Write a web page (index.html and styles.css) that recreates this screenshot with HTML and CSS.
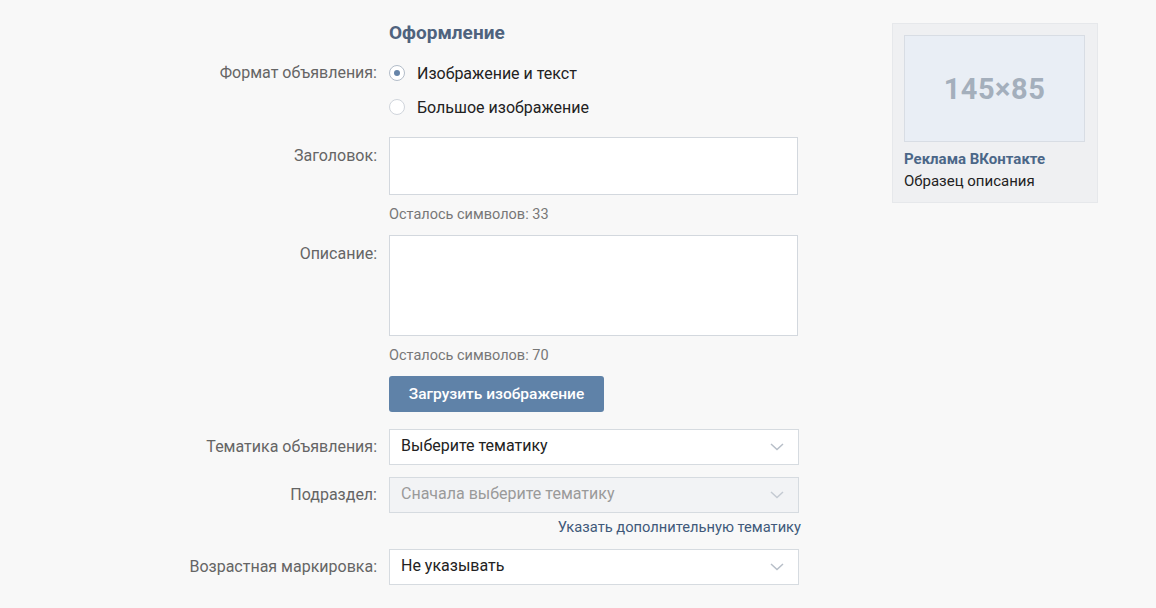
FILE: index.html
```html
<!DOCTYPE html>
<html lang="ru">
<head>
<meta charset="utf-8">
<title>Оформление</title>
<link rel="stylesheet" href="styles.css">
</head>
<body>
<div class="page">
  <div class="form">
    <div class="row heading-row">
      <div class="label"></div>
      <h2 class="heading">Оформление</h2>
    </div>

    <div class="row radio-row">
      <div class="label label-radio">Формат объявления:</div>
      <div class="radios">
        <div class="radio checked"><span class="dot"></span><span>Изображение и текст</span></div>
        <div class="radio"><span class="dot"></span><span>Большое изображение</span></div>
      </div>
    </div>

    <div class="row field-row">
      <div class="label label-top">Заголовок:</div>
      <div class="control">
        <div class="input input-title"></div>
        <div class="counter">Осталось символов: 33</div>
      </div>
    </div>

    <div class="row field-row">
      <div class="label label-top">Описание:</div>
      <div class="control">
        <div class="input input-desc"></div>
        <div class="counter">Осталось символов: 70</div>
      </div>
    </div>

    <div class="row button-row">
      <div class="label"></div>
      <div class="control"><button class="btn">Загрузить изображение</button></div>
    </div>

    <div class="row select-row">
      <div class="label">Тематика объявления:</div>
      <div class="select"><span>Выберите тематику</span><svg class="chev" width="14" height="8" viewBox="0 0 14 8"><path d="M1 1l6 5.5L13 1" fill="none" stroke="#b7bec8" stroke-width="1.5"/></svg></div>
    </div>

    <div class="row select-row sub-row">
      <div class="label">Подраздел:</div>
      <div class="control">
        <div class="select disabled"><span>Сначала выберите тематику</span><svg class="chev" width="14" height="8" viewBox="0 0 14 8"><path d="M1 1l6 5.5L13 1" fill="none" stroke="#c4cad2" stroke-width="1.5"/></svg></div>
        <div class="link-line"><a class="link">Указать дополнительную тематику</a></div>
      </div>
    </div>

    <div class="row select-row age-row">
      <div class="label">Возрастная маркировка:</div>
      <div class="select"><span>Не указывать</span><svg class="chev" width="14" height="8" viewBox="0 0 14 8"><path d="M1 1l6 5.5L13 1" fill="none" stroke="#b7bec8" stroke-width="1.5"/></svg></div>
    </div>
  </div>

  <aside class="preview">
    <div class="preview-img">145×85</div>
    <div class="preview-title">Реклама ВКонтакте</div>
    <div class="preview-desc">Образец описания</div>
  </aside>
</div>
</body>
</html>
```

FILE: styles.css
```css
* { box-sizing: border-box; }
html, body {
  margin: 0;
  padding: 0;
  background: #f8f8f8;
  font-family: Roboto, "Liberation Sans", Arial, sans-serif;
  color: #222;
}
.page {
  display: flex;
  align-items: flex-start;
  gap: 92px;
  width: 1156px;
  height: 608px;
  overflow: hidden;
}
.form {
  width: 800px;
  padding-top: 22px;
}
.row {
  display: grid;
  grid-template-columns: 377px 410px;
  column-gap: 12px;
}
.label {
  text-align: right;
  font-size: 16px;
  line-height: 20px;
  color: #656565;
}
.heading {
  margin: 0;
  font-size: 19px;
  line-height: 22px;
  font-weight: 700;
  color: #4f637e;
}
.radio-row { margin-top: 12px; }
.label-radio { padding-top: 7px; }
.radios { display: flex; flex-direction: column; }
.radio {
  display: flex;
  align-items: center;
  gap: 12px;
  height: 34px;
  font-size: 16px;
  color: #222;
}
.radio .dot {
  width: 16px;
  height: 16px;
  border-radius: 50%;
  border: 1px solid #d0d5dc;
  background: #fff;
  position: relative;
  flex: none;
}
.radio.checked .dot { border-color: #b3bdc9; }
.radio.checked .dot::after {
  content: "";
  position: absolute;
  left: 4px;
  top: 4px;
  width: 6px;
  height: 6px;
  border-radius: 50%;
  background: #6684a8;
}
.field-row { margin-top: 13px; }
.field-row + .field-row { margin-top: 10px; }
.label-top { padding-top: 9px; }
.input {
  background: #fff;
  border: 1px solid #d3d8de;
  width: 409px;
}
.input-title { height: 58px; }
.input-desc { height: 101px; }
.counter {
  margin-top: 10px;
  font-size: 14.5px;
  line-height: 20px;
  color: #777;
}
.button-row { margin-top: 10px; }
.btn {
  width: 215px;
  height: 36px;
  border: 0;
  border-radius: 3px;
  background: #5f82a8;
  color: #fff;
  font-family: Roboto, "Liberation Sans", Arial, sans-serif;
  font-size: 15.5px;
  font-weight: 500;
  padding: 0;
}
.select-row { margin-top: 17px; align-items: start; }
.select-row .label { padding-top: 8px; }
.sub-row, .age-row { margin-top: 12px; }
.select {
  display: flex;
  align-items: center;
  justify-content: space-between;
  width: 410px;
  height: 36px;
  padding: 0 14px 0 11px;
  background: #fff;
  border: 1px solid #d6dbe0;
  font-size: 16px;
  color: #222;
}
.select span { position: relative; top: -2px; }
.select.disabled {
  background: #f2f3f5;
  color: #9a9a9a;
}
.link-line {
  text-align: right;
  margin-top: 4px;
  margin-right: -2px;
  font-size: 14.7px;
  line-height: 20px;
}
.link { color: #40597a; }
.preview {
  margin-top: 23px;
  width: 206px;
  height: 180px;
  background: #eff0f2;
  border: 1px solid #e6e8eb;
  padding: 11px 11px 0;
}
.preview-img {
  width: 181px;
  height: 107px;
  background: #e9eef5;
  border: 1px solid #d8dde4;
  display: flex;
  align-items: center;
  justify-content: center;
  font-size: 29px;
  font-weight: 700;
  color: #a4afbc;
  letter-spacing: 0.5px;
}
.preview-title {
  margin-top: 6px;
  font-size: 15px;
  line-height: 22px;
  font-weight: 700;
  color: #4b6788;
}
.preview-desc {
  font-size: 15px;
  line-height: 22px;
  color: #222;
}
```
